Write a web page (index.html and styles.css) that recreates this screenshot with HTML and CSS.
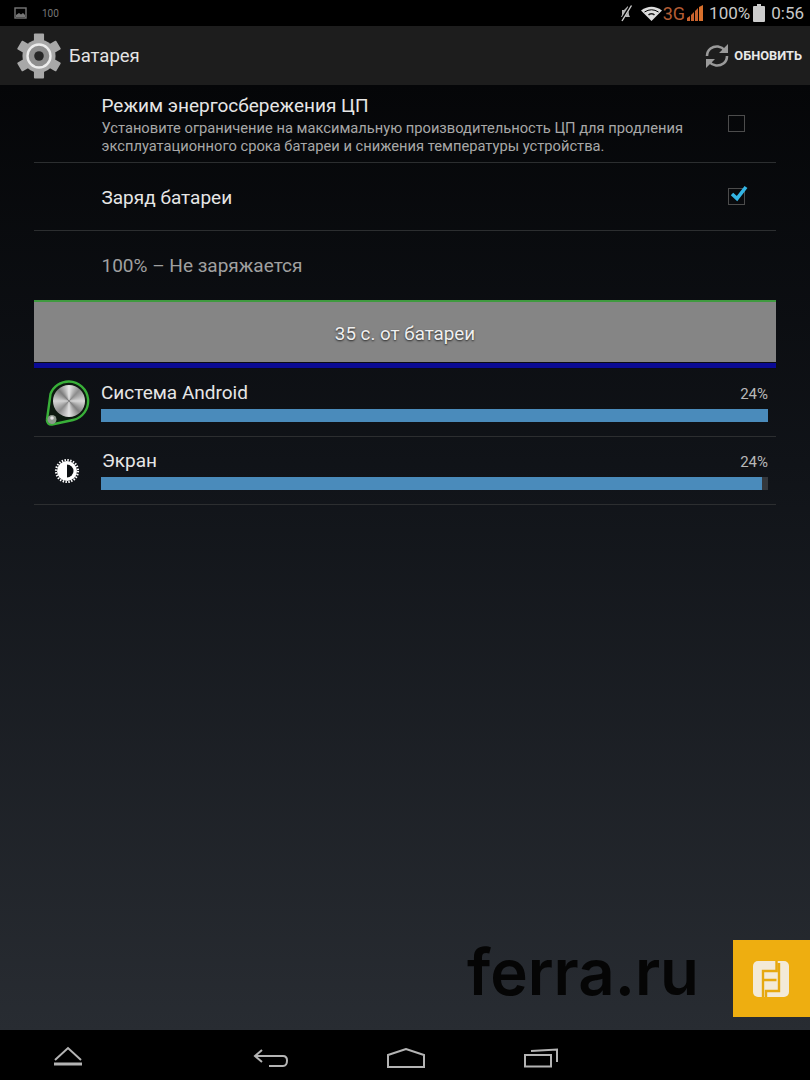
FILE: index.html
```html
<!DOCTYPE html>
<html lang="ru">
<head>
<meta charset="utf-8">
<title>Батарея</title>
<link rel="stylesheet" href="styles.css">
</head>
<body>
<div class="screen">
  <header class="status">
    <div class="status-left">
      <svg class="st-img" width="13" height="12" viewBox="0 0 13 12"><rect x="1" y="1" width="11" height="10" fill="none" stroke="#777" stroke-width="1.4"/><path d="M2 10V8l3-2 2 1.5L9 6l2 2v2z" fill="#777"/></svg>
      <span class="st-num">100</span>
    </div>
    <div class="status-right">
      <svg class="st-mute" width="14" height="18" viewBox="0 0 14 18"><path d="M9 2 5 6H3v5l-1 2h9l-1-2z" fill="#b4b4b4"/><path d="M12 1 2 17" stroke="#000" stroke-width="2.6"/><path d="M12.500 1.500 3 17" stroke="#d0d0d0" stroke-width="1.4"/></svg>
      <svg class="st-wifi" width="21" height="15" viewBox="0 0 21 15"><path d="M0 4.500Q10.500-3 21 4.500L10.500 15z" fill="#ddd"/><path d="M3.500 6Q10.500 1.500 17.500 6" fill="none" stroke="#000" stroke-width="1"/><path d="M7.500 9Q10.500 6.500 13.500 9" fill="none" stroke="#222" stroke-width="1.600"/></svg>
      <span class="st-3g">3G</span>
      <svg class="st-signal" width="17" height="16" viewBox="0 0 17 16"><path d="M0 16v-3l3-2v5zM4 16v-6l3-3v9zM8 16V6l3-3v13z" fill="#c8622e"/><path d="M12 16V2l4-2v16z" fill="#d8702c"/></svg>
      <span class="st-text st-pct">100%</span>
      <svg class="st-batt" width="12" height="18" viewBox="0 0 12 18"><path d="M4 0h4v2h3a1 1 0 0 1 1 1v14a1 1 0 0 1-1 1H1a1 1 0 0 1-1-1V3a1 1 0 0 1 1-1h3z" fill="#ccc"/></svg>
      <span class="st-text st-time">0:56</span>
    </div>
  </header>

  <div class="actionbar">
    <div class="ab-title">
      <svg class="ab-gear" width="46" height="50" viewBox="-25 -25 50 50">
        <g fill="#a8a8a8">
          <circle r="18"/>
          <rect x="-5.500" y="-24.500" width="11" height="49" rx="1"/>
          <rect x="-5.500" y="-24.500" width="11" height="49" rx="1" transform="rotate(60)"/>
          <rect x="-5.500" y="-24.500" width="11" height="49" rx="1" transform="rotate(120)"/>
        </g>
        <circle r="12.500" fill="#8e8e8e" stroke="#ececec" stroke-width="2.600"/>
        <circle r="5.200" fill="#262626"/>
      </svg>
      <span class="ab-text">Батарея</span>
    </div>
    <div class="ab-action">
      <svg width="24" height="26" viewBox="0 0 24 26"><g fill="none" stroke="#9a9a9a" stroke-width="2.600"><path d="M2 13C2 6 8 3 13 3.500 16 4 18 5 19.500 7"/><path d="M22 13c0 7-6 10-11 9.500C8 22 6 21 4.500 19"/></g><path d="M23 1v9h-9zM1 25v-9h9z" fill="#9a9a9a"/></svg>
      <span class="ab-action-text">ОБНОВИТЬ</span>
    </div>
  </div>

  <main class="content">
    <section class="row row-saver">
      <div class="row-text">
        <div class="row-title">Режим энергосбережения ЦП</div>
        <div class="row-sub">Установите ограничение на максимальную производительность ЦП для продления<br>эксплуатационного срока батареи и снижения температуры устройства.</div>
      </div>
      <span class="check"></span>
    </section>
    <section class="row row-charge">
      <div class="row-text"><div class="row-title">Заряд батареи</div></div>
      <span class="check">
        <svg class="tick" width="20" height="18" viewBox="0 0 20 18"><path d="M3 9l5 4.500L17 2" fill="none" stroke="#33b5e5" stroke-width="3.600"/></svg>
      </span>
    </section>
    <section class="row-status">100% – Не заряжается</section>
    <section class="chart">
      <div class="chart-body"><span class="chart-label">35 с. от батареи</span></div>
      <div class="chart-axis"></div>
    </section>

    <section class="usage">
      <div class="usage-icon">
        <svg width="46" height="46" viewBox="0 0 46 46">
          <path d="M25 1.500a19.500 19.500 0 0 1 4 38.500L8 44.500C5 45 2.500 42.500 3 39.500L6.500 14A19.500 19.500 0 0 1 25 1.500z" fill="#0d1a10" stroke="#39b039" stroke-width="2.400"/>
          <foreignObject x="9" y="5" width="32" height="32"><div class="metal"></div></foreignObject>
          <circle cx="8" cy="39.500" r="4.500" fill="#8d9a8d"/>
          <circle cx="8" cy="38" r="1.800" fill="#e4e4e4"/>
        </svg>
      </div>
      <div class="usage-main">
        <div class="usage-head"><span class="usage-name">Система Android</span><span class="usage-pct">24%</span></div>
        <div class="bar"><div class="bar-fill bar-full"></div></div>
      </div>
    </section>
    <section class="usage">
      <div class="usage-icon">
        <svg class="sun" width="26" height="26" viewBox="-13 -13 26 26">
          <circle r="10" fill="#fff"/>
          <circle r="11" fill="none" stroke="#fff" stroke-width="2.200" stroke-dasharray="1.440 1.440"/>
          <path d="M0-6.500a6.500 6.500 0 0 1 0 13z" fill="#0c0f12"/>
        </svg>
      </div>
      <div class="usage-main">
        <div class="usage-head"><span class="usage-name usage-name-low">Экран</span><span class="usage-pct">24%</span></div>
        <div class="bar"><div class="bar-fill bar-most"></div></div>
      </div>
    </section>

    <div class="watermark">
      <span class="wm-text">ferra.ru</span>
      <div class="wm-badge">
        <svg width="36" height="36" viewBox="0 0 36 36"><rect width="36" height="36" rx="5" fill="#f3ead8"/><path d="M23.500 0v10H10v26M13 36v-6h13V2M10 19h13.500" fill="none" stroke="#e6a80f" stroke-width="2.400"/></svg>
      </div>
    </div>
  </main>

  <nav class="navbar">
    <svg class="nav-up" width="32" height="22" viewBox="0 0 32 22"><path d="M3 14 16 2l13 12" fill="none" stroke="#b4b4b4" stroke-width="2"/><path d="M2 18h28" stroke="#b4b4b4" stroke-width="3"/></svg>
    <svg class="nav-back" width="36" height="20" viewBox="0 0 36 20"><path d="M9 2 2 8l7 6" fill="none" stroke="#b4b4b4" stroke-width="2"/><path d="M2 8h28c3 0 4 2 4 4.500S33 18 30 18H16" fill="none" stroke="#b4b4b4" stroke-width="2"/></svg>
    <svg class="nav-home" width="38" height="20" viewBox="0 0 38 20"><path d="M1 7 19 1l18 6v12H1z" fill="none" stroke="#b4b4b4" stroke-width="2"/></svg>
    <svg class="nav-recent" width="36" height="20" viewBox="0 0 36 20"><rect x="2" y="7" width="26" height="11.500" fill="none" stroke="#b4b4b4" stroke-width="2"/><path d="M8 3 34 1.500V14" fill="none" stroke="#b4b4b4" stroke-width="2"/></svg>
  </nav>
</div>
</body>
</html>
```

FILE: styles.css
```css
* { box-sizing: border-box; }
html, body { margin: 0; padding: 0; background: #000; }
body { font-family: Roboto, "Liberation Sans", sans-serif; }
.screen { width: 810px; height: 1080px; display: flex; flex-direction: column; overflow: hidden; }

.status { height: 26px; flex: none; background: #000; display: flex; justify-content: space-between; align-items: center; padding: 0 6px 0 14px; }
.status-left { display: flex; align-items: center; gap: 15px; }
.st-num { font-size: 10px; color: #777; }
.status-right { display: flex; align-items: center; color: #c8c8c8; }
.st-mute { margin-right: 8px; }
.st-wifi { margin-right: 1px; }
.st-3g { font-size: 18px; color: #b25c34; margin-right: 2px; }
.st-signal { margin-right: 5px; }
.st-text { font-size: 17px; }
.st-pct { margin-right: 3px; }
.st-batt { margin-right: 6px; }

.actionbar { height: 59px; flex: none; background: #1d1d1d; display: flex; justify-content: space-between; align-items: center; padding: 0 8px 0 16px; }
.ab-title { display: flex; align-items: center; gap: 7px; }
.ab-text { font-size: 18.500px; color: #e4e4e4; }
.ab-action { display: flex; align-items: center; gap: 5px; }
.ab-action-text { font-size: 12.800px; font-weight: 700; color: #e8e8e8; }

.content { flex: 1; position: relative; padding: 0 34px; background: linear-gradient(180deg, #050608 0%, #101318 40%, #282c32 100%); }
.row { display: flex; border-bottom: 1px solid #2c2e30; padding-left: 67.500px; }
.row-saver { height: 78px; padding-top: 10px; }
.row-charge { height: 68px; padding-top: 24px; }
.row-text { flex: 1; }
.row-title { font-size: 19px; line-height: 22px; color: #e6e6e6; }
.row-sub { font-size: 14.700px; line-height: 18px; margin-top: 2px; color: #a8a8a8; white-space: nowrap; }
.check { position: relative; flex: none; width: 17px; height: 17px; margin: 20px 31px 0 0; border: 1px solid #4c4c4c; }
.row-charge .check { margin-top: 1px; }
.tick { position: absolute; left: 0; top: -4px; }
.row-status { height: 69px; padding: 24px 0 0 67.500px; font-size: 19px; line-height: 22px; color: #a0a0a0; }
.chart { height: 69px; display: flex; flex-direction: column; background: #0c0c14; border-top: 2px solid #3f9a3f; }
.chart-body { flex: 1; display: flex; align-items: center; justify-content: center; padding-top: 4px; background: #858585; }
.chart-label { font-size: 18.800px; color: #f0f0f0; text-shadow: 0 1px 2px #222; }
.chart-axis { height: 5px; flex: none; margin: 1px 0; background: #0a0a94; }

.usage { height: 68px; display: flex; border-bottom: 1px solid #2c2e30; }
.usage-icon { width: 67px; flex: none; display: flex; justify-content: center; align-items: center; padding-right: 1px; }
.metal { width: 32px; height: 32px; border-radius: 50%; background: conic-gradient(#e8e8e8, #8c8c8c 12%, #d8d8d8 25%, #808080 38%, #e4e4e4 50%, #8c8c8c 62%, #d4d4d4 75%, #7c7c7c 88%, #e8e8e8); }
.usage-main { flex: 1; padding: 12px 8px 0 0; }
.usage-head { display: flex; justify-content: space-between; align-items: baseline; height: 28px; }
.usage-name { font-size: 19px; line-height: 24px; color: #e6e6e6; }
.usage-name-low { margin-left: 1px; }
.usage-pct { font-size: 15px; color: #b8b8b8; }
.bar { height: 13px; background: #34373b; }
.bar-fill { height: 100%; background: #4a8bbb; }
.bar-full { width: 100%; }
.bar-most { width: 99.100%; }

.watermark { position: absolute; right: 0; top: 855px; display: flex; gap: 34px; }
.wm-text { font-family: Inter, Roboto, sans-serif; font-size: 63.500px; font-weight: 600; line-height: 63px; color: #050505; }
.wm-badge { width: 77px; height: 77px; background: #eeae10; display: flex; align-items: center; justify-content: center; padding-right: 2px; }

.navbar { height: 50px; flex: none; background: #000; position: relative; display: flex; align-items: center; padding: 0 0 0 52px; }
.nav-up { margin-right: 169px; margin-top: 4px; }
.nav-back { margin-right: 98px; margin-top: 5px; }
.nav-home { margin-right: 98px; margin-top: 5px; }
.nav-recent { margin-top: 5px; }
```
